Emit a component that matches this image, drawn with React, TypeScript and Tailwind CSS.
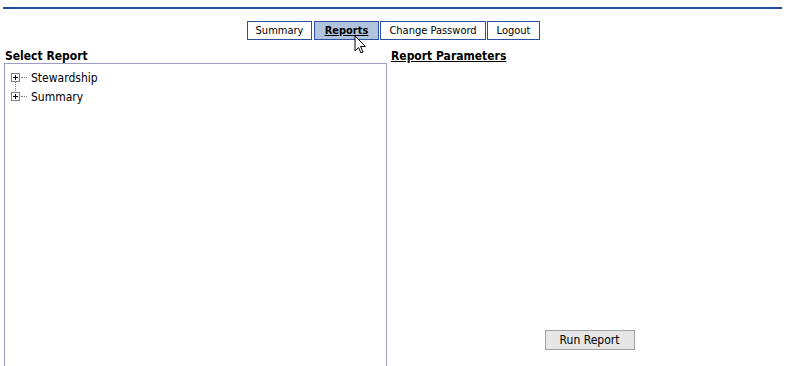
import React from 'react';

function PlusBox() {
  return (
    <svg width="9" height="9" viewBox="0 0 9 9" className="block">
      <rect x="0.5" y="0.5" width="8" height="8" fill="#fff" stroke="#808080" />
      <path d="M2 4.5h5M4.5 2v5" stroke="#000" strokeWidth="1" />
    </svg>
  );
}

function TreeNode({ label, last }: { label: string; last?: boolean }) {
  return (
    <div className="relative flex items-center h-[19px]">
      {!last && (
        <div className="absolute left-[4px] top-[14px] h-[11px] border-l border-dotted border-[#808080]" />
      )}
      <PlusBox />
      <div className="w-[6px] ml-[1px] border-t border-dotted border-[#808080]" />
      <span className="ml-[4px] text-[12px] text-black">{label}</span>
    </div>
  );
}

const tabs = [
  { label: 'Summary', cls: 'w-[65px]' },
  { label: 'Reports', cls: 'w-[65px] ml-[2px]' },
  { label: 'Change Password', cls: 'w-[106px] ml-[1px]' },
  { label: 'Logout', cls: 'w-[53px] ml-[1px]' },
];

export default function App() {
  return (
    <div
      className="w-[794px] h-[366px] bg-white overflow-hidden"
      style={{ fontFamily: 'Tahoma, "DejaVu Sans Condensed", "Liberation Sans", Verdana, sans-serif' }}
    >
      <div className="ml-[3px] w-[779px] pt-[7px]">
        <div className="h-[2px] bg-[#1f4f9c]" />
        <div className="flex mt-[12px] ml-[244px]">
          {tabs.map((t) => (
            <div
              key={t.label}
              className={
                'relative h-[19px] flex items-center justify-center pt-[1px] border border-[#2a4fa3] text-[11px] text-black whitespace-nowrap ' +
                t.cls +
                (t.label === 'Reports' ? ' bg-[#b0c4de] font-bold underline' : ' bg-white')
              }
            >
              {t.label}
              {t.label === 'Reports' && (
                <svg width="14" height="20" viewBox="0 0 14 20" className="absolute left-[39px] top-[13px]">
                  <path d="M1 1v15l3.5-3.5 2.5 5.5 2-1-2.5-5.5h5z" fill="#fff" stroke="#000" strokeWidth="1" strokeLinejoin="round" />
                </svg>
              )}
            </div>
          ))}
        </div>
      </div>
      <div className="flex mt-[9px] pl-[4px]">
        <div className="w-[383px]">
          <div className="text-[12px] font-bold text-black leading-[14px] pl-[1px]">Select Report</div>
          <div className="h-[320px] border border-[#9c9cc4] pl-[6px] pt-[4px]">
            <TreeNode label="Stewardship" />
            <TreeNode label="Summary" last />
          </div>
        </div>
        <div className="flex-1 flex flex-col pl-[4px]">
          <div className="text-[12px] font-bold text-black underline leading-[14px]">Report Parameters</div>
          <div className="flex justify-center mt-[267px] pr-[6px]">
            <button className="w-[90px] h-[20px] border border-[#a0a0a0] bg-[#e6e6e6] text-[12px] text-black">
              Run Report
            </button>
          </div>
        </div>
      </div>
    </div>
  );
}
